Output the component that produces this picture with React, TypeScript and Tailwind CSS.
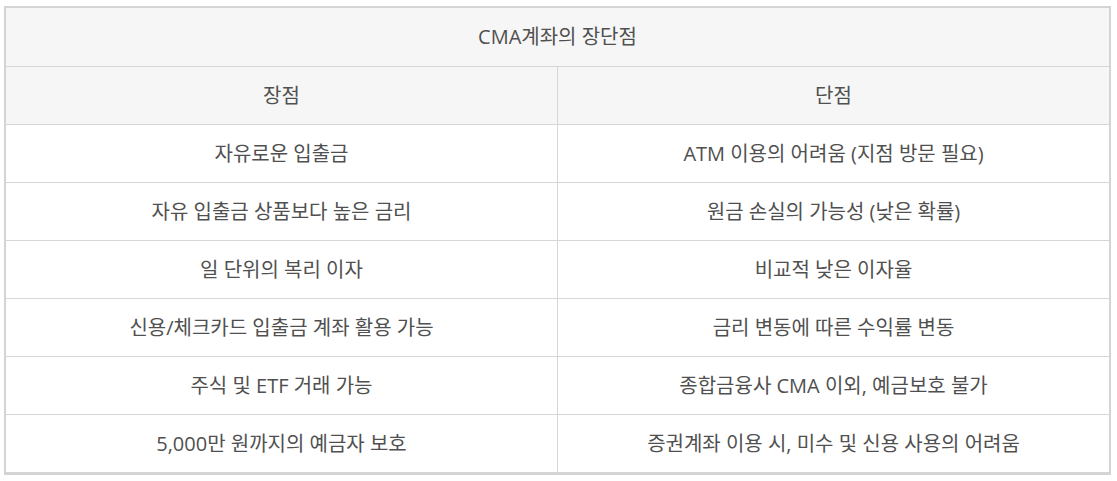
const rows: [string, string][] = [
  ["자유로운 입출금", "ATM 이용의 어려움 (지점 방문 필요)"],
  ["자유 입출금 상품보다 높은 금리", "원금 손실의 가능성 (낮은 확률)"],
  ["일 단위의 복리 이자", "비교적 낮은 이자율"],
  ["신용/체크카드 입출금 계좌 활용 가능", "금리 변동에 따른 수익률 변동"],
  ["주식 및 ETF 거래 가능", "종합금융사 CMA 이외, 예금보호 불가"],
  ["5,000만 원까지의 예금자 보호", "증권계좌 이용 시, 미수 및 신용 사용의 어려움"],
];

function Cell({ children, divider }: { children: React.ReactNode; divider?: boolean }) {
  return (
    <div
      className={`h-[58px] flex items-center justify-center border-b border-[#d6d6d6] ${
        divider ? "border-l" : ""
      }`}
    >
      {children}
    </div>
  );
}

export default function App() {
  return (
    <div className="bg-white w-[1117px] h-[481px] pt-[6px] pl-[4px]">
      <div
        className="w-[1107px] border-2 border-[#d4d4d4] text-[20px] text-[#505050]"
        style={{ fontFamily: '"Open Sans", "Noto Sans CJK KR", sans-serif' }}
      >
        <div className="h-[59px] flex items-center justify-center bg-[#f6f6f6] border-b border-[#d6d6d6]">
          CMA계좌의 장단점
        </div>
        <div className="grid grid-cols-[551px_552px] bg-[#f6f6f6]">
          <Cell>장점</Cell>
          <Cell divider>단점</Cell>
        </div>
        <div className="grid grid-cols-[551px_552px]">
          {rows.map(([pro, con]) => (
            <>
              <Cell key={pro}>{pro}</Cell>
              <Cell key={con} divider>
                {con}
              </Cell>
            </>
          ))}
        </div>
      </div>
    </div>
  );
}
